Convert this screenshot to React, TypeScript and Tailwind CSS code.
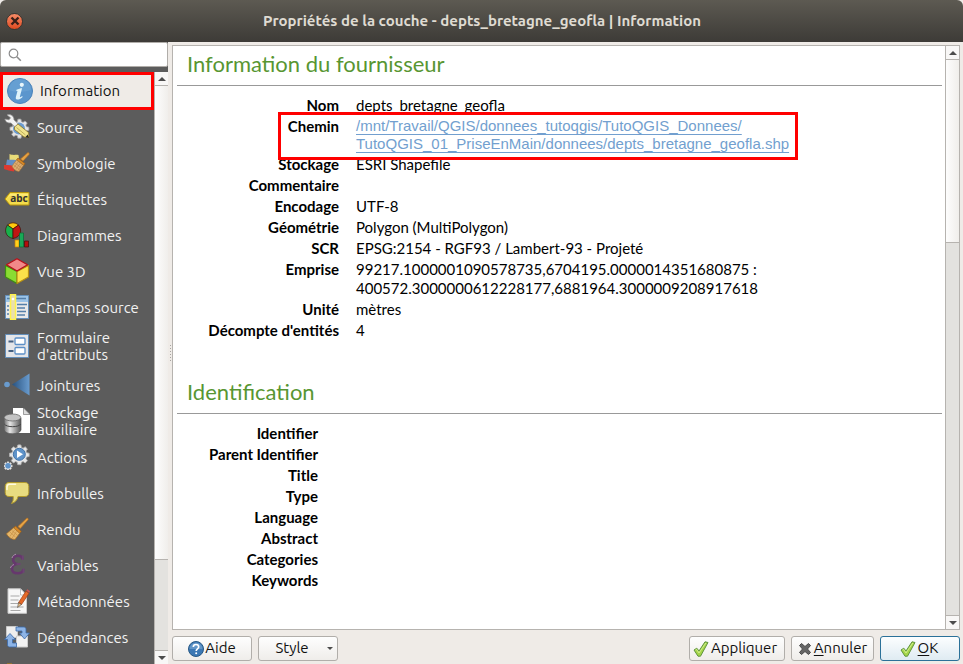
import type { ReactNode } from "react";

function Svg({ children }: { children: ReactNode }) {
  return (
    <svg viewBox="0 0 26 26" className="size-[26px] shrink-0" aria-hidden="true">
      {children}
    </svg>
  );
}

function InfoIcon() {
  return (
    <Svg>
      <circle cx="13" cy="13" r="12.5" fill="#5b96cd" stroke="#4a83ba" />
      <path d="M2 12a11 11 0 0 1 22 0c-6 2-15 3-22 0z" fill="#72a7d8" opacity=".5" />
      <circle cx="14.8" cy="6.8" r="2.1" fill="#e8f6fb" />
      <path d="M9.500 11.800c2-.9 3.900-1.500 5.600-1.500l-2.200 8.200c-.2 1 .7.8 2.300-.4l.4.800c-2.500 2.300-4.200 2.900-5.800 2.500-1.200-.4-1.200-1.500-.8-3l1.500-5.500-1.300-.100z" fill="#dff3fa" />
    </Svg>
  );
}

const GEAR =
  "M13 2l2 .2.600 3 2 .8 2.500-1.700 2.700 2.700-1.700 2.500.8 2 3 .600v3.900l-3 .600-.8 2 1.700 2.500-2.700 2.700-2.500-1.700-2 .8-.600 3h-3.900l-.600-3-2-.8-2.500 1.700-2.700-2.700 1.700-2.500-.8-2-3-.600v-3.900l3-.600.8-2-1.700-2.500 2.700-2.700 2.500 1.700 2-.8.600-3z";

function SourceIcon() {
  return (
    <Svg>
      <path transform="translate(5 3.500) scale(.8)" d={GEAR} fill="#e6e6e6" stroke="#a5a5a5" />
      <circle cx="15" cy="14.500" r="6" fill="#6c9cd0" />
      <path d="M3 1c3-1.200 7 .5 7 4.800l4.500 4.500-3 3L7 9C4 9.500 1.300 8 .8 5l4.200.8 1.500-2z" fill="#f2f2f2" stroke="#8b8b8b" strokeWidth=".7" />
      <path d="M10.500 13l3.500-3L24.500 18.500l.5 5-5-.5-9.500-7.500z" fill="#f1e48c" stroke="#897329" strokeWidth=".8" />
      <path d="M12.500 13.500l9 7.500" stroke="#b4a34d" strokeWidth=".8" />
      <path d="M23.500 20.500l1.700 3.200-3.700-.5z" fill="#222" />
    </Svg>
  );
}

function Brush() {
  return (
    <>
      <path d="M24 1.500c1 .3 1.500 1.200 1 2l-8 9-2.500-2z" fill="#e5a345" stroke="#b96f1c" strokeWidth=".7" />
      <path d="M12 10l6 5.500-1.800 2-6.200-5.500z" fill="#d58726" stroke="#9c5c12" strokeWidth=".7" />
      <path d="M10 11.800l6.300 5.700-4.800 6.500c-4 0-7.500-3-9-6z" fill="#e4b66b" stroke="#a66a20" strokeWidth=".7" />
      <path d="M11 14l-5 7M13 15.500l-4.500 7M8 14.500l6 5M6 16l6 5.500" stroke="#c28a40" strokeWidth=".6" />
    </>
  );
}

function SymbologyIcon() {
  return (
    <Svg>
      <path d="M5.500 4c3 1.500 6 .5 9 1l1 6.500-10 1z" fill="#e9dc78" />
      <path d="M3 9.500c3 1 7-.5 11 1l-2 6-10-1z" fill="#648fc5" />
      <path d="M0 15c5 0 8 0 11 2l-1 4.500C6 21 3 20 0 19z" fill="#dc3930" />
      <path d="M24 2.500c1 .3 1.500 1.200 1 2l-6 6.500-2.500-2z" fill="#e5a345" stroke="#b96f1c" strokeWidth=".7" />
      <path d="M14 8l7 5.500-1.300 2L12.500 10z" fill="#d58726" stroke="#9c5c12" strokeWidth=".7" />
      <path d="M12.500 10l7 5.500-4.500 6c-3-.2-6-2.500-7-5.500z" fill="#dfae70" stroke="#a77439" strokeWidth=".6" />
      <path d="M14 12l-4 5.500M16 13.500l-4 6M17.500 15l-3.500 5.500M11 13l6.500 5M9.500 15l6.500 5" stroke="#b9854a" strokeWidth=".6" />
    </Svg>
  );
}

function LabelIcon() {
  return (
    <Svg>
      <path d="M1 13l5-6.500h19v12.500H6z" fill="#f4dc4c" stroke="#b9960b" />
      <path d="M2.500 13l4-5.200h17.700v2H6z" fill="#fff08a" opacity=".7" />
      <text x="15" y="16" textAnchor="middle" fontSize="10" fontWeight="bold" fill="#333" fontFamily="Noto Sans, sans-serif">abc</text>
    </Svg>
  );
}

function DiagramIcon() {
  return (
    <Svg>
      <g stroke="#3d1009" strokeWidth=".7">
        <path d="M9 7L3.500 3a8 8 0 0 1 11 0z" fill="#ffc90e" />
        <path d="M9 7L3.500 3C0 7.500 1 15 9 16.500z" fill="#18b04b" />
        <path d="M9 7l5.500-4c4 5 2.500 12-5.500 13.500z" fill="#c01512" />
        <path d="M11 18h4v7h-4z" fill="#ffd21c" stroke="#c57b0a" />
        <path d="M15.500 11h4v14h-4z" fill="#18a957" stroke="#096a32" />
        <path d="M20.500 19h4v6h-4z" fill="#b40d0d" />
      </g>
    </Svg>
  );
}

function CubeIcon() {
  return (
    <Svg>
      <g strokeLinejoin="round" strokeWidth="1.200">
        <path d="M1.500 7.500L13 13.500V25.500L1.500 19z" fill="#8adc32" stroke="#3e8d13" />
        <path d="M24.500 7.500L13 13.500V25.500L24.500 19z" fill="#fae14a" stroke="#b68e13" />
        <path d="M13 .7l10.500 6L13 13 2.500 6.700z" fill="#f28989" stroke="#b90f18" />
      </g>
    </Svg>
  );
}

function FieldsIcon() {
  return (
    <Svg>
      <path d="M1.500 1.500h23v23h-23z" fill="#e9e9e9" stroke="#648fba" />
      <path d="M2 2h22v6H2z" fill="#9cc4e8" />
      <path d="M3 4.500h19M13 10.500h10M13 14h8M13 17.500h9M13 21h8M3 12h2M3 16h2M3 20h2" stroke="#5580aa" strokeWidth="1.300" />
      <path d="M6.500.5h5v25h-5z" fill="#e9dfae" stroke="#fff34a" strokeWidth="1.500" />
      <circle cx="9" cy="5" r="1.300" fill="#fff" />
    </Svg>
  );
}

function FormIcon() {
  return (
    <Svg>
      <path d="M1.500 1.500h23v23h-23z" fill="#e4e5e8" stroke="#648fba" />
      <path d="M4.500 8.500h5M4.500 18h5" stroke="#435f80" strokeWidth="2" />
      <rect x="11" y="5" width="10" height="6.500" rx="1" fill="#fff" stroke="#5c8fc6" strokeWidth="1.300" />
      <rect x="11" y="14.500" width="10" height="6.500" rx="1" fill="#fff" stroke="#5c8fc6" strokeWidth="1.300" />
    </Svg>
  );
}

function JoinIcon() {
  return (
    <Svg>
      <defs>
        <linearGradient id="join">
          <stop offset="0" stopColor="#28527f" />
          <stop offset="1" stopColor="#699bce" />
        </linearGradient>
      </defs>
      <circle cx="3" cy="12.500" r="2.800" fill="#699bce" />
      <path d="M8 12.500L25.500 1.500v22z" fill="url(#join)" />
    </Svg>
  );
}

function StorageIcon() {
  return (
    <Svg>
      <defs>
        <linearGradient id="drum">
          <stop offset="0" stopColor="#6d6d6d" />
          <stop offset=".35" stopColor="#e6e6e6" />
          <stop offset="1" stopColor="#555" />
        </linearGradient>
      </defs>
      <path d="M9 0h10.500L26 6.500V25H9z" fill="#fff" />
      <path d="M19.500 0v6.500H26z" fill="#ddd" stroke="#666" strokeWidth=".6" />
      <path d="M0 10v12c1 5 15.500 5 17 0V10z" fill="url(#drum)" stroke="#555" strokeWidth=".7" />
      <ellipse cx="8.500" cy="9.500" rx="8.300" ry="3.500" fill="#c3c3c3" stroke="#666" strokeWidth=".8" />
      <path d="M.3 16c2 3.600 14.700 3.600 16.500 0" fill="none" stroke="#444" />
    </Svg>
  );
}

function ActionIcon() {
  return (
    <Svg>
      <path transform="translate(4.500 -.8) scale(.83)" d={GEAR} fill="#e7e7e7" stroke="#b0b0b0" />
      <circle cx="15.300" cy="10.300" r="6" fill="#5f93c9" stroke="#4374a8" />
      <path d="M13 6.500l6 3.800-6 3.800z" fill="#fff" />
      <path transform="translate(-.7 17) scale(.36)" d={GEAR} fill="#e7e7e7" stroke="#eee" />
      <circle cx="4" cy="21.700" r="2.800" fill="#5f93c9" />
    </Svg>
  );
}

function TipIcon() {
  return (
    <Svg>
      <path d="M5 2.500h16c2.500 0 3.800 1.500 3.800 4v6c0 2.500-1.300 4-3.800 4h-7c-.5 3.500-3 6-6.500 7 1.500-2 2-4 1.700-7H5c-2.500 0-3.800-1.500-3.800-4v-6c0-2.500 1.300-4 3.800-4z" fill="#e8dc80" stroke="#b29a2c" />
      <path d="M3 9.500V7c0-2 .8-2.800 2.500-2.800h6" fill="none" stroke="#fffbe0" strokeWidth="1.500" strokeLinecap="round" />
    </Svg>
  );
}

function RenderIcon() {
  return (
    <Svg>
      <g transform="translate(0 .5) scale(.96)">
        <Brush />
      </g>
    </Svg>
  );
}

function VariableIcon() {
  return (
    <Svg>
      <path d="M18.500 7.500c-.2-2.500-2-3.800-4.500-3.800-3 0-4.800 1.500-4.800 4 0 2.300 1.500 3.900 4.300 4.300-3.500.3-5.500 2-5.500 4.700 0 2.900 2.300 4.600 5.800 4.600 3.200 0 5.200-1.300 5.700-4" fill="none" stroke="#66386d" strokeWidth="2.600" />
      <path d="M12.500 12h4M18.800 3.500v4.500M19.500 16.500v4.500" stroke="#6d4473" strokeWidth="1.800" />
      <path d="M8 6c.4-1.800 2-3.300 4-3.800M6.500 16c.4-1.600 1.600-2.800 3.500-3.500" fill="none" stroke="#a98bac" />
    </Svg>
  );
}

function MetadataIcon() {
  return (
    <Svg>
      <path d="M4 .8h12.500L22.500 7v18.300H4z" fill="#f7f7f7" stroke="#c9c9c9" />
      <path d="M16.500.8V7h6z" fill="#fff" stroke="#aaa" strokeWidth=".7" />
      <path d="M6.500 8h9M6.500 12h8M6.500 15.500h11M6.500 19h13M6.500 22.500h10" stroke="#a9a9a9" />
      <path d="M22 3l3 2.300-7.500 11.200-3-1.800z" fill="#e56928" stroke="#a43c11" strokeWidth=".7" />
      <path d="M14.500 14.700l3 1.800-4 3z" fill="#eac189" stroke="#333" strokeWidth=".5" />
      <path d="M22.300 2.500l1-1.200 2.700 2-.8 1.500z" fill="#cf5350" />
    </Svg>
  );
}

function DependencyIcon() {
  return (
    <Svg>
      <path d="M2.500 2.500h11v11h-11z" fill="#eee" stroke="#c8c8c8" />
      <path d="M12.500 12h11v11h-11z" fill="#f2f2f2" stroke="#ccc" />
      <g fill="#8db4e6" stroke="#3b69aa" strokeWidth=".8">
        <path d="M12 3h8c1 0 2 1 2 2v4h3.500l-5 6-5-6H18V7h-6z" />
        <path d="M6 9.500l5.500 6H8.500V19h4v4h-7c-1 0-2-1-2-2v-5.500H.5z" />
      </g>
    </Svg>
  );
}

function NextIcon() {
  return (
    <Svg>
      <path d="M3 3h5v5H3z" fill="#f5b51c" stroke="#c68407" />
      <path d="M10 10h12v12H10z" fill="#e5e5e5" />
    </Svg>
  );
}

const sections: { label: string; icon: ReactNode; tall?: boolean }[] = [
  { label: "Source", icon: <SourceIcon /> },
  { label: "Symbologie", icon: <SymbologyIcon /> },
  { label: "Étiquettes", icon: <LabelIcon /> },
  { label: "Diagrammes", icon: <DiagramIcon /> },
  { label: "Vue 3D", icon: <CubeIcon /> },
  { label: "Champs source", icon: <FieldsIcon /> },
  { label: "Formulaire d'attributs", icon: <FormIcon />, tall: true },
  { label: "Jointures", icon: <JoinIcon /> },
  { label: "Stockage auxiliaire", icon: <StorageIcon /> },
  { label: "Actions", icon: <ActionIcon /> },
  { label: "Infobulles", icon: <TipIcon /> },
  { label: "Rendu", icon: <RenderIcon /> },
  { label: "Variables", icon: <VariableIcon /> },
  { label: "Métadonnées", icon: <MetadataIcon /> },
  { label: "Dépendances", icon: <DependencyIcon /> },
];

const identification = ["Identifier", "Parent Identifier", "Title", "Type", "Language", "Abstract", "Categories", "Keywords"];

function Arrow({ up }: { up?: boolean }) {
  return (
    <svg viewBox="0 0 8 4" className="h-1 w-2" aria-hidden="true">
      <path d={up ? "M0 4l4-4 4 4z" : "M0 0h8L4 4z"} fill="#4c4c4c" />
    </svg>
  );
}

function ScrollBar({ thumb }: { thumb: string }) {
  return (
    <div className="flex w-3.5 shrink-0 flex-col border-l border-[#b6b3af] bg-[#e3e2df]">
      <button aria-label="Défiler vers le haut" className="flex h-3.5 shrink-0 items-center justify-center border-b border-[#b6b3af] bg-[#f8f7f6]">
        <Arrow up />
      </button>
      <div className="min-h-0 flex-1">
        <div className={`border-b border-[#b6b3af] bg-linear-to-r from-[#fdfdfd] to-[#f0eeeb] ${thumb}`} />
      </div>
      <button aria-label="Défiler vers le bas" className="flex h-3.5 shrink-0 items-center justify-center border-t border-[#b6b3af] bg-[#f8f7f6]">
        <Arrow />
      </button>
    </div>
  );
}

function CheckIcon() {
  return (
    <svg viewBox="0 0 16 16" className="size-4" aria-hidden="true">
      <path d="M1 9l2.800-1.800L6 10 12 .8l3 .7-7.500 13.700H5z" fill="#a5d548" stroke="#5f9440" strokeLinejoin="round" />
      <path d="M2.500 9l1-.7 2.500 3.700 6.800-10" fill="none" stroke="#d8f2a0" strokeWidth=".8" />
    </svg>
  );
}

function CrossIcon() {
  return (
    <svg viewBox="0 0 14 14" className="size-3.5" aria-hidden="true">
      <path d="M3.500 1.500L7 4.500l3.500-3L12.500 3.500 9.500 7l3 3.500-2 2L7 9.500l-3.500 3-2-2L4.500 7l-3-3.500z" fill="#656565" stroke="#484848" strokeLinejoin="round" />
    </svg>
  );
}

function HelpIcon() {
  return (
    <svg viewBox="0 0 16 16" className="size-4" aria-hidden="true">
      <circle cx="8" cy="8" r="7.500" fill="#3c78b4" stroke="#285985" />
      <path d="M1.500 8a6.500 6.500 0 0 1 13 0z" fill="#72a2d0" opacity=".7" />
      <path d="M5.300 6c0-3.300 5.400-3.300 5.400 0 0 1.900-2.500 1.900-2.500 4" fill="none" stroke="#fff" strokeWidth="1.600" />
      <circle cx="8.200" cy="12.300" r="1" fill="#fff" />
    </svg>
  );
}

const dialogButton = "flex h-[25px] items-center justify-center rounded-[3px] border border-[#b1aeaa] bg-linear-to-b from-[#fefefe] to-[#efedea]";

function Heading({ children }: { children: ReactNode }) {
  return <h2 className="border-b border-[#999] pb-2 pl-2.5 text-[22px] leading-[26px] text-[#589632]">{children}</h2>;
}

function Row({ label, children }: { label: string; children?: ReactNode }) {
  return (
    <tr className="align-top">
      <th scope="row" className="py-px text-right font-bold">{label}</th>
      <td className="py-px pl-[17px]">{children}</td>
    </tr>
  );
}

export default function App() {
  return (
    <div className="flex h-screen flex-col overflow-hidden bg-[#efebe7] font-['Ubuntu','Noto_Sans',sans-serif] text-[15px] text-[#111]">
      <header className="flex h-[42px] shrink-0 items-center rounded-t-md bg-linear-to-b from-[#5d5a52] to-[#3d3b37] px-1.5">
        <button aria-label="Fermer" className="flex size-[17px] items-center justify-center rounded-full border border-[#393530] bg-linear-to-b from-[#f58a66] to-[#df4a1d]">
          <svg viewBox="0 0 10 10" className="size-2.5" aria-hidden="true">
            <path d="M1.500 1.500l7 7M8.500 1.500l-7 7" stroke="#3a2018" strokeWidth="2.400" />
          </svg>
        </button>
        <h1 className="flex-1 pr-4 text-center font-bold text-[#dfdbd2]">Propriétés de la couche - depts_bretagne_geofla | Information</h1>
      </header>

      <div className="flex min-h-0 flex-1">
        <aside className="flex w-[168px] shrink-0 flex-col bg-[#5c5c5c]">
          <label className="flex h-[25px] shrink-0 items-center rounded-xs border border-[#b0ada9] bg-white px-[7px]">
            <svg viewBox="0 0 14 14" className="size-3.5 shrink-0" aria-hidden="true">
              <circle cx="5.500" cy="5.500" r="4.300" fill="none" stroke="#8c8c8c" strokeWidth="1.200" />
              <path d="M8.800 8.800l4 4" stroke="#8c8c8c" strokeWidth="1.600" />
            </svg>
            <input type="search" aria-label="Rechercher" className="min-w-0 flex-1 bg-transparent px-1 outline-none" />
          </label>
          <div className="flex min-h-0 flex-1 pt-[5px]">
            <nav className="min-w-0 flex-1 overflow-hidden">
              <button className="flex h-[38px] w-full items-center gap-[7px] border-3 border-[#f00] bg-[#efebe7] pl-1 text-left">
                <InfoIcon />
                Information
              </button>
              {sections.map((s) => (
                <button key={s.label} className={`flex w-full items-center gap-[7px] pb-0.5 pl-1 text-left leading-[17px] text-[#f2f2f2] ${s.tall ? "h-[42px]" : "h-9"}`}>
                  {s.icon}
                  {s.label}
                </button>
              ))}
              <div className="flex h-9 items-center pl-1">
                <NextIcon />
              </div>
            </nav>
            <ScrollBar thumb="h-[84%]" />
          </div>
        </aside>

        <div className="flex w-1 shrink-0 flex-col items-center justify-center gap-0.5">
          {[0, 1, 2, 3, 4, 5].map((n) => (
            <span key={n} className="size-px bg-[#a8a5a1]" />
          ))}
        </div>

        <div className="flex min-w-0 flex-1 flex-col pt-[3px] pr-[3px] pb-[3px]">
          <main className="flex min-h-0 flex-1 border border-[#b6b3af] bg-white">
            <div className="min-w-0 flex-1 overflow-hidden pt-[5px] pr-[3px] pl-1 font-['Lato',sans-serif] leading-[19px] text-black">
              <section>
                <Heading>Information du fournisseur</Heading>
                <table className="mt-[9px]">
                  <colgroup>
                    <col className="w-[162px]" />
                    <col />
                  </colgroup>
                  <tbody>
                    <Row label="Nom">depts_bretagne_geofla</Row>
                    <tr className="relative z-10 align-top">
                      <th scope="row" className="py-px text-right font-bold">
                        <span className="absolute -top-1 -right-[9px] -bottom-[6px] left-[101px] -z-10 border-3 border-[#f00] bg-white" />
                        Chemin
                      </th>
                      <td className="py-px pl-[17px] font-['Liberation_Sans',Arial,sans-serif] leading-[18px]">
                        <a href="#chemin" className="text-[#729fcf] underline decoration-1 underline-offset-[3px] [text-decoration-skip-ink:none]">
                          /mnt/Travail/QGIS/donnees_tutoqgis/TutoQGIS_Donnees/
                          <br />
                          TutoQGIS_01_PriseEnMain/donnees/depts_bretagne_geofla.shp
                        </a>
                      </td>
                    </tr>
                    <Row label="Stockage">ESRI Shapefile</Row>
                    <Row label="Commentaire" />
                    <Row label="Encodage">UTF-8</Row>
                    <Row label="Géométrie">Polygon (MultiPolygon)</Row>
                    <Row label="SCR">EPSG:2154 - RGF93 / Lambert-93 - Projeté</Row>
                    <Row label="Emprise">
                      99217.1000001090578735,6704195.0000014351680875 :
                      <br />
                      400572.3000000612228177,6881964.3000009208917618
                    </Row>
                    <Row label="Unité">mètres</Row>
                    <Row label="Décompte d'entités">4</Row>
                  </tbody>
                </table>
              </section>
              <section className="mt-[38px]">
                <Heading>Identification</Heading>
                <table className="mt-[9px]">
                  <colgroup>
                    <col className="w-[141px]" />
                    <col />
                  </colgroup>
                  <tbody>
                    {identification.map((label) => (
                      <Row key={label} label={label} />
                    ))}
                  </tbody>
                </table>
              </section>
            </div>
            <ScrollBar thumb="h-[33%]" />
          </main>

          <footer className="flex shrink-0 gap-1.5 pt-1.5">
            <button className={`w-20 gap-px ${dialogButton}`}>
              <HelpIcon />
              Aide
            </button>
            <button className={`w-20 gap-[18px] pl-3 ${dialogButton}`}>
              Style
              <svg viewBox="0 0 6 3" className="h-[3px] w-1.5" aria-hidden="true">
                <path d="M0 0h6L3 3z" fill="#4c4c4c" />
              </svg>
            </button>
            <button className={`ml-auto w-24 gap-0.5 pr-1 ${dialogButton}`}>
              <CheckIcon />
              Appliquer
            </button>
            <button className={`w-[83px] gap-0.5 ${dialogButton}`}>
              <CrossIcon />
              <span><u className="underline-offset-2">A</u>nnuler</span>
            </button>
            <button className="flex h-[25px] w-20 items-center justify-center gap-0.5 rounded-[3px] border border-[#2b7199] bg-linear-to-b from-[#fcfeff] to-[#dfebf2] pr-0.5">
              <CheckIcon />
              <span><u className="underline-offset-2">O</u>K</span>
            </button>
          </footer>
        </div>
      </div>
    </div>
  );
}
